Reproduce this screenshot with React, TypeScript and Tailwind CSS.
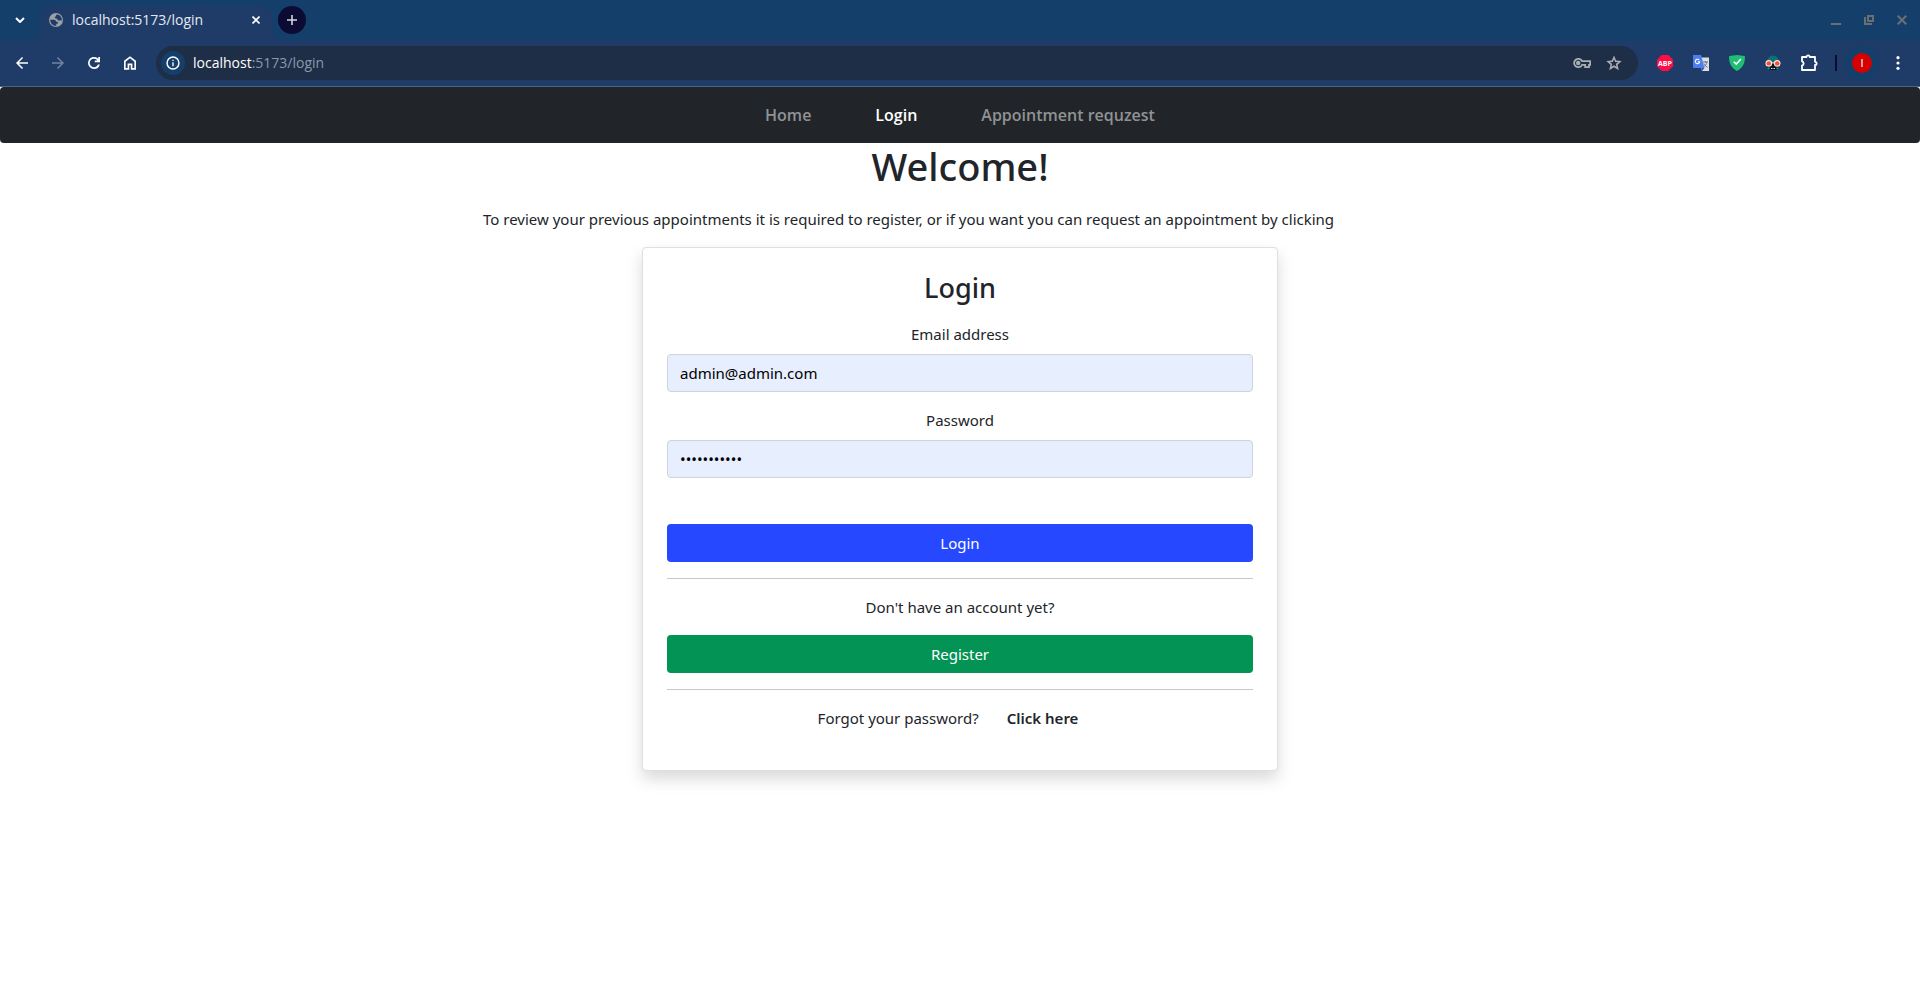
import { useState, type ReactNode } from "react";

type IconProps = { children: ReactNode; className?: string; box?: string };

function Icon({ children, className = "size-5", box = "0 0 24 24" }: IconProps) {
  return (
    <svg viewBox={box} className={className} fill="currentColor" aria-hidden="true">
      {children}
    </svg>
  );
}

function TabStrip() {
  return (
    <div className="flex h-10 items-center bg-[#153f6b]">
      <button type="button" aria-label="Search tabs" className="flex h-10 w-10 items-center justify-center">
        <svg viewBox="0 0 10 6" className="h-[6px] w-[10px]" fill="none" stroke="currentColor" strokeWidth="2" aria-hidden="true">
          <path d="M1 1l4 4 4-4" />
        </svg>
      </button>
      <div className="relative flex h-10 w-58 items-end">
        <svg viewBox="0 0 10 10" className="absolute bottom-0 -left-[10px] size-[10px]" fill="#1f3c68" aria-hidden="true">
          <path d="M10 0v10H0A10 10 0 0 0 10 0z" />
        </svg>
        <svg viewBox="0 0 10 10" className="absolute -right-[10px] bottom-0 size-[10px]" fill="#1f3c68" aria-hidden="true">
          <path d="M0 0v10h10A10 10 0 0 1 0 0z" />
        </svg>
        <div className="flex h-[34px] w-full items-center rounded-t-[10px] bg-[#1f3c68] pr-2 pb-[6px] pl-2">
          <Icon className="size-4 text-[#9aa0a6]" box="0 0 16 16">
            <circle cx="8" cy="8" r="7" />
            <path
              fill="#1f3c68"
              d="M9.600 2.400C8 2.600 7.600 3.600 8.200 4.300c-1.300.1-1.500 1-1.300 1.900.8.300 2.300.2 2.700 1.200.300 1 1.300 1.300 2.300 1 .8-.2 1.500-.1 1.700.6.200-.4.200-.8.200-1.200A5.800 5.800 0 0 0 9.600 2.400zM2.200 7.700h3.600c1.300 0 2.300.8 2.300 2h1.700v2H8.300v2c-3.400.3-6.200-2.500-6.100-6z"
            />
          </Icon>
          <span className="ml-2 flex-1 text-sm text-[#e3e8ef]">localhost:5173/login</span>
          <button type="button" aria-label="Close tab" className="flex size-4 items-center justify-center">
            <svg viewBox="0 0 8 8" className="size-2" stroke="currentColor" strokeWidth="1.600" aria-hidden="true">
              <path d="M.5.5l7 7M7.500.5l-7 7" />
            </svg>
          </button>
        </div>
      </div>
      <button type="button" aria-label="New tab" className="ml-[6px] flex size-7 items-center justify-center rounded-full bg-[#0b0b33] text-[#d5d5dc]">
        <svg viewBox="0 0 10 10" className="size-[10px]" stroke="currentColor" strokeWidth="1.600" aria-hidden="true">
          <path d="M5 0v10M0 5h10" />
        </svg>
      </button>
      <div className="ml-auto flex items-center gap-[23px] pr-[13px] text-[#6b6f74]">
        <button type="button" aria-label="Minimize" className="flex h-10 items-center">
          <svg viewBox="0 0 10 10" className="size-[10px]" aria-hidden="true">
            <path d="M0 8h10v2H0z" fill="currentColor" />
          </svg>
        </button>
        <button type="button" aria-label="Restore" className="flex h-10 items-center">
          <svg viewBox="0 0 10 10" className="size-[10px]" fill="none" stroke="currentColor" strokeWidth="2" aria-hidden="true">
            <path d="M4 1h5v5H4zM1 2v7h7" />
          </svg>
        </button>
        <button type="button" aria-label="Close window" className="flex h-10 items-center">
          <svg viewBox="0 0 10 10" className="size-[10px]" stroke="currentColor" strokeWidth="2" aria-hidden="true">
            <path d="M.7.7l8.600 8.600M9.300.7L.7 9.300" />
          </svg>
        </button>
      </div>
    </div>
  );
}

function ToolButton({ label, children }: { label: string; children: ReactNode }) {
  return (
    <button type="button" aria-label={label} className="flex size-9 shrink-0 items-center justify-center">
      {children}
    </button>
  );
}

function Toolbar() {
  return (
    <div className="flex h-[47px] items-center border-b border-[#49658c] bg-[#1f3c68] pr-1 pl-1">
      <ToolButton label="Back">
        <Icon className="size-[18px]"><path d="M7.800 13l5.600 5.600L12 20l-8-8 8-8 1.400 1.400L7.800 11H20v2z" /></Icon>
      </ToolButton>
      <ToolButton label="Forward">
        <Icon className="size-[18px] text-[#74849f]"><path d="M16.200 13l-5.600 5.600L12 20l8-8-8-8-1.400 1.400 5.600 5.600H4v2z" /></Icon>
      </ToolButton>
      <ToolButton label="Reload">
        <Icon className="size-[18px]"><path d="M12 20a8 8 0 1 1 5.700-13.700V4H20v7h-7V8.600h3.600A5.700 5.700 0 1 0 17.300 14h2.450A8 8 0 0 1 12 20z" /></Icon>
      </ToolButton>
      <ToolButton label="Home">
        <Icon className="size-[18px]"><path d="M6.200 18.800h2.600v-6h6.400v6h2.600v-8.600L12 5.800l-5.800 4.400zM4 21V9.100L12 3l8 6.100V21h-7v-6h-2v6z" /></Icon>
      </ToolButton>
      <div className="ml-2 flex h-[34px] flex-1 items-center rounded-full bg-[#1e2e46] pr-[15px] pl-[5px]">
        <button type="button" aria-label="Site information" className="flex size-6 items-center justify-center rounded-full bg-[#153f6b]">
          <Icon className="size-4"><path d="M11 17h2v-6h-2zM11 9h2V7h-2zM12 22a10 10 0 1 1 0-20 10 10 0 0 1 0 20zm0-2.200a7.800 7.800 0 1 0 0-15.600 7.800 7.800 0 0 0 0 15.600z" fillRule="evenodd" /></Icon>
        </button>
        <a href="#address" className="ml-2 flex-1 text-sm text-[#8b98a9]">
          <span className="text-white">localhost</span>:5173/login
        </a>
        <div className="flex items-center gap-[14px] text-[#a9aeb6]">
          <button type="button" aria-label="Passwords">
            <svg viewBox="0 0 18 12" className="h-3 w-[18px]" fill="none" stroke="currentColor" strokeWidth="1.800" aria-hidden="true">
              <path d="M9.100 4.200H17.200v3.600H16v2.400h-3.800V7.800H9.100a4.200 4.200 0 1 1 0-3.600z" />
              <circle cx="5.200" cy="6" r="1.300" fill="currentColor" />
            </svg>
          </button>
          <button type="button" aria-label="Bookmark this page">
            <Icon className="size-[18px]"><path d="M12 2l2.900 6.800 7.400.6-5.600 4.900 1.700 7.200-6.400-3.800-6.400 3.800 1.700-7.200L1.700 9.400l7.400-.6zM12 7l-1.500 3.500-3.800.3 2.900 2.500-.9 3.700 3.300-2 3.300 2-.9-3.700 2.900-2.500-3.800-.3z" fillRule="evenodd" /></Icon>
          </button>
        </div>
      </div>
      <div className="ml-[9px] flex items-center">
        <ToolButton label="Ad blocker">
          <svg viewBox="0 0 16 16" className="size-4" aria-hidden="true">
            <path d="M4.700 0h6.600L16 4.700v6.600L11.300 16H4.700L0 11.300V4.700z" fill="#ff0d47" />
            <text x="8" y="10.800" textAnchor="middle" fontSize="7" fontWeight="700" fill="#fff">ABP</text>
          </svg>
        </ToolButton>
        <ToolButton label="Translate">
          <svg viewBox="0 0 16 16" className="size-4" aria-hidden="true">
            <path d="M6 2.500h10v13.500H9z" fill="#dcdee2" />
            <path d="M10 7h5M12.500 6v1.500M14 7c-.5 2.500-1.800 4-3.500 5M11 8.500c.6 1.500 1.700 2.800 3.500 3.700" stroke="#607988" fill="none" />
            <path d="M0 0h8l3.500 13H1a1 1 0 0 1-1-1z" fill="#4f7df0" />
            <path d="M8.500 13h3L9 16z" fill="#2f4fc4" />
            <path d="M6.200 5a2.200 2.200 0 1 0 .5 1.700H4.700" stroke="#fff" strokeWidth="1.100" fill="none" />
          </svg>
        </ToolButton>
        <ToolButton label="Protection">
          <svg viewBox="0 0 16 16" className="size-4" aria-hidden="true">
            <path d="M0 1.200C3 .8 5.500 0 8 0s5 .8 8 1.200c0 7-2 11.500-8 14.800C2 12.700 0 8.200 0 1.200z" fill="#1fbe74" />
            <path d="M4.800 6.700l2.500 2.400 4.600-5" stroke="#fff" strokeWidth="1.500" fill="none" />
          </svg>
        </ToolButton>
        <ToolButton label="Robot extension">
          <svg viewBox="0 0 16 16" className="size-4" aria-hidden="true">
            <path d="M2 7.500C2 3.500 4.500.6 8 .6s6 2.900 6 6.900z" fill="#0b7078" />
            <path d="M1.500 9h13l-1 6h-11z" fill="#0a141c" />
            <circle cx="3.800" cy="8.400" r="3.300" fill="#ffe3da" />
            <circle cx="12.200" cy="8.400" r="3.300" fill="#ffe3da" />
            <circle cx="3.800" cy="8.400" r="2.200" fill="#f0503c" />
            <circle cx="12.200" cy="8.400" r="2.200" fill="#f0503c" />
            <path d="M6.500 7.800h3" stroke="#ffe3da" />
            <path d="M2.500 13.500h2M11.500 13.500h2" stroke="#20a0a0" strokeWidth="2" />
            <path d="M6 13.500h4" stroke="#d8e4e4" strokeDasharray="1 .5" />
          </svg>
        </ToolButton>
        <ToolButton label="Extensions">
          <svg viewBox="0 0 18 18" className="size-[18px]" fill="none" stroke="currentColor" strokeWidth="1.800" aria-hidden="true">
            <path d="M2 3h4.500a1.600 1.600 0 0 1 3.200 0H15v4.800a1.600 1.600 0 0 1 0 3.200v5H2v-4.300a2.300 2.300 0 0 0 0-4.400z" strokeLinejoin="round" />
          </svg>
        </ToolButton>
        <div className="mx-2 h-4 w-[2px] bg-[#0b0b33]" />
        <button type="button" aria-label="Profile" className="mr-[1px] flex size-[34px] items-center justify-center rounded-full bg-[#153f6b]">
          <span className="flex size-5 items-center justify-center rounded-full bg-[#d50000] text-[11px] text-white">
            <span className="font-['Liberation_Sans',sans-serif]">I</span>
          </span>
        </button>
        <ToolButton label="Menu">
          <svg viewBox="0 0 4 14" className="h-[14px] w-1" fill="currentColor" aria-hidden="true">
            <circle cx="2" cy="1.700" r="1.600" />
            <circle cx="2" cy="7" r="1.600" />
            <circle cx="2" cy="12.300" r="1.600" />
          </svg>
        </ToolButton>
      </div>
    </div>
  );
}

const navLinks = [
  { label: "Home", href: "#home", active: false },
  { label: "Login", href: "#login", active: true },
  { label: "Appointment requzest", href: "#appointment", active: false },
];

function NavBar() {
  return (
    <div className="bg-white">
      <nav className="flex h-14 items-center justify-center gap-16 rounded-[4px] bg-[#212529] text-base font-semibold">
        {navLinks.map((link) => (
          <a key={link.label} href={link.href} className={link.active ? "text-white" : "text-[#909294]"}>
            {link.label}
          </a>
        ))}
      </nav>
    </div>
  );
}

function Field({ id, label, type, initial }: { id: string; label: string; type: string; initial: string }) {
  const [value, setValue] = useState(initial);
  return (
    <div className="mb-4">
      <label htmlFor={id} className="mb-2 block">{label}</label>
      <input
        id={id}
        type={type}
        value={value}
        onChange={(e) => setValue(e.target.value)}
        className="block h-[38px] w-full rounded-[4px] border border-[#ced4da] bg-[#e7eefe] px-3 text-black"
      />
    </div>
  );
}

function LoginCard() {
  return (
    <form
      onSubmit={(e) => e.preventDefault()}
      className="mx-auto w-full max-w-[636px] rounded-[4px] border border-[#dfdfdf] bg-white p-6 text-center shadow-[0_8px_16px_rgba(0,0,0,0.15)]"
    >
      <h2 className="mb-[18px] text-[27px] leading-8 font-medium">Login</h2>
      <Field id="email" label="Email address" type="email" initial="admin@admin.com" />
      <Field id="password" label="Password" type="password" initial="adminadmin1" />
      <button type="submit" className="mt-[46px] block h-[38px] w-full rounded-[4px] bg-[#2648ff] text-white">Login</button>
      <hr className="my-4 border-[#c7c8c9]" />
      <p className="mb-4">Don't have an account yet?</p>
      <button type="button" className="block h-[38px] w-full rounded-[4px] bg-[#039354] text-white">Register</button>
      <hr className="my-4 border-[#c7c8c9]" />
      <p className="mb-4 flex justify-center gap-7 pr-6">
        Forgot your password?
        <a href="#reset" className="font-semibold">Click here</a>
      </p>
    </form>
  );
}

export default function App() {
  return (
    <div className="min-h-screen bg-white text-[15px] leading-6 text-[#212529]">
      <header className="font-['Open_Sans',sans-serif] text-white">
        <TabStrip />
        <Toolbar />
      </header>
      <div className="font-['Open_Sans',sans-serif]">
        <NavBar />
      </div>
      <main className="font-['Noto_Sans',sans-serif]">
        <h1 className="mb-[18px] text-center text-[38px] leading-[46px] font-medium">Welcome!</h1>
        <p className="mx-auto mb-4 max-w-[954px]">
          To review your previous appointments it is required to register, or if you want you can request an appointment by clicking
        </p>
        <LoginCard />
      </main>
    </div>
  );
}
